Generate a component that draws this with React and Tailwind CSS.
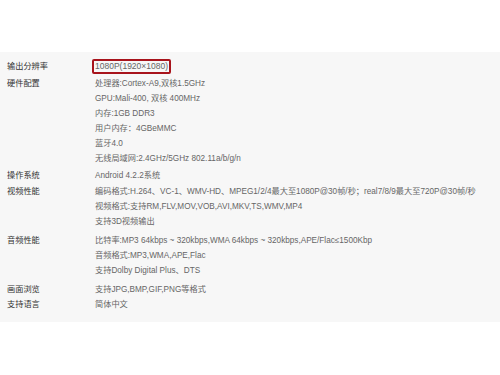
import * as React from "react";

const specs = [
    { label: "输出分辨率", lines: ["1080P(1920×1080)"], highlight: true, gap: "mt-0" },
    {
        label: "硬件配置",
        lines: [
            "处理器:Cortex-A9,双核1.5GHz",
            "GPU:Mali-400, 双核 400MHz",
            "内存:1GB DDR3",
            "用户内存：4GBeMMC",
            "蓝牙4.0",
            "无线局域网:2.4GHz/5GHz 802.11a/b/g/n",
        ],
        gap: "mt-[2px]",
    },
    { label: "操作系统", lines: ["Android 4.2.2系统"], gap: "mt-[2px]" },
    {
        label: "视频性能",
        lines: [
            "编码格式:H.264、VC-1、WMV-HD、MPEG1/2/4最大至1080P@30帧/秒；real7/8/9最大至720P@30帧/秒",
            "视频格式:支持RM,FLV,MOV,VOB,AVI,MKV,TS,WMV,MP4",
            "支持3D视频输出",
        ],
        gap: "mt-[1px]",
    },
    {
        label: "音频性能",
        lines: [
            "比特率:MP3 64kbps ~ 320kbps,WMA 64kbps ~ 320kbps,APE/Flac≤1500Kbp",
            "音频格式:MP3,WMA,APE,Flac",
            "支持Dolby Digital Plus、DTS",
        ],
        gap: "mt-[4px]",
    },
    { label: "画面浏览", lines: ["支持JPG,BMP,GIF,PNG等格式"], gap: "mt-[4px]" },
    { label: "支持语言", lines: ["简体中文"], gap: "mt-0" },
];

export default function App() {
    return (
        <div
            className="w-[500px] h-[375px] bg-white overflow-hidden"
            style={{ fontFamily: '"Liberation Sans", "Noto Sans CJK SC", sans-serif' }}
        >
            <div className="mt-[52px] h-[270px] bg-[#f7f7f7] pt-[7px] text-[8.2px] leading-[15px]">
                {specs.map((row) => (
                    <div key={row.label} className={`flex ${row.gap}`}>
                        <div className="w-[95px] shrink-0 pl-[7px] text-[#333]">{row.label}</div>
                        <div className="flex flex-col text-[#666] whitespace-nowrap">
                            {row.lines.map((line) =>
                                row.highlight ? (
                                    <span
                                        key={line}
                                        className="-ml-[3px] self-start border-2 border-[#a8141c] rounded-[2px] px-[1px] text-[8.5px] leading-[11px]"
                                    >
                                        {line}
                                    </span>
                                ) : (
                                    <span key={line}>{line}</span>
                                )
                            )}
                        </div>
                    </div>
                ))}
            </div>
        </div>
    );
}
